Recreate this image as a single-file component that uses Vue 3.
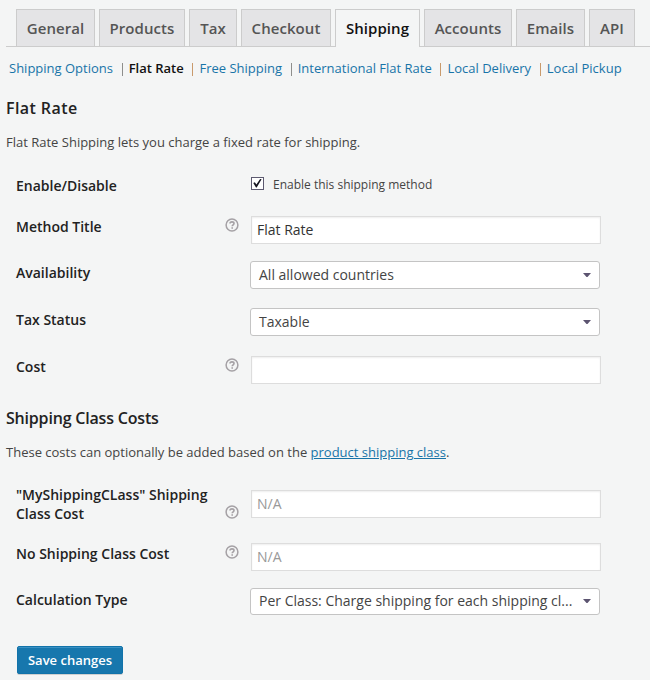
<script setup>
import { ref } from 'vue'

const tabs = ['General', 'Products', 'Tax', 'Checkout', 'Shipping', 'Accounts', 'Emails', 'API']
const methods = ['Shipping Options', 'Flat Rate', 'Free Shipping', 'International Flat Rate', 'Local Delivery', 'Local Pickup']
const enabled = ref(true)

const rates = ref([
  { label: 'Method Title', kind: 'input', value: 'Flat Rate', help: true, cls: 'title' },
  { label: 'Availability', kind: 'select', value: 'All allowed countries', cls: 'availability' },
  { label: 'Tax Status', kind: 'select', value: 'Taxable', cls: 'tax' },
  { label: 'Cost', kind: 'input', value: '', help: true, cls: 'cost' },
])
const classes = ref([
  { label: '"MyShippingCLass" Shipping Class Cost', kind: 'input', value: '', placeholder: 'N/A', help: true, cls: 'named-class' },
  { label: 'No Shipping Class Cost', kind: 'input', value: '', placeholder: 'N/A', help: true, cls: 'no-class' },
  { label: 'Calculation Type', kind: 'select', value: 'Per Class: Charge shipping for each shipping cl...', cls: 'calculation' },
])
const groups = [rates, classes]
</script>

<template>
  <main class="page">
    <nav class="tabs">
      <a v-for="t in tabs" :key="t" class="tab" :class="[t.toLowerCase(), { active: t === 'Shipping' }]">{{ t }}</a>
    </nav>

    <ul class="methods">
      <li v-for="(m, i) in methods" :key="m">
        <a :class="{ current: i === 1 }">{{ m }}</a><span v-if="i < methods.length - 1" class="bar" :class="{ warm: i === 1 || i > 2 }"></span>
      </li>
    </ul>

    <section v-for="(group, g) in groups" :key="g" :class="'group-' + g">
      <h3>{{ g === 0 ? 'Flat Rate' : 'Shipping Class Costs' }}</h3>
      <p v-if="g === 0">Flat Rate Shipping lets you charge a fixed rate for shipping.</p>
      <p v-else>These costs can optionally be added based on the <a class="link">product shipping class</a>.</p>

      <div v-if="g === 0" class="row enable">
        <span class="label">Enable/Disable</span>
        <span class="help"></span>
        <label class="check">
          <input v-model="enabled" type="checkbox" />
          <span class="box">
            <svg v-if="enabled" width="11" height="11" viewBox="0 0 11 11"><path d="M1.3 5.1 2.8 4.3 4.4 6.5 8.1 .9 9.6 1.3 4.7 9.4 4 9.4Z" fill="#15151f" /></svg>
          </span>
          Enable this shipping method
        </label>
      </div>

      <div v-for="f in group.value" :key="f.label" class="row" :class="f.cls">
        <span class="label">{{ f.label }}</span>
        <span class="help">
          <svg v-if="f.help" width="14" height="14" viewBox="0 0 14 14" fill="none" stroke="#a5a1a5">
            <circle cx="7" cy="7" r="5.9" stroke-width="1.5" />
            <path d="M5 5.6C5 4.4 5.8 3.9 7 3.9S9 4.5 9 5.5C9 6.8 7.2 6.8 7.2 8.3" stroke-width="1.6" />
            <path d="M6.4 9.9H8" stroke-width="1.5" />
          </svg>
        </span>
        <input v-if="f.kind === 'input'" v-model="f.value" class="field" type="text" :placeholder="f.placeholder" />
        <div v-else class="select">
          <span class="chosen">{{ f.value }}</span>
          <svg width="8" height="4" viewBox="0 0 8 4"><path d="M0 0H8L4.5 4H3.5Z" fill="#5c5470" /></svg>
        </div>
      </div>
    </section>

    <button class="save" type="button">Save changes</button>
  </main>
</template>

<style>
body {
  margin: 0;
  background: #f4f5f5;
}
</style>

<style scoped>
.page {
  box-sizing: border-box;
  height: 680px;
  overflow: hidden;
  padding: 9px 0 0 6px;
  background: #f4f5f5;
  color: #444;
  font: 13px/20px "Open Sans", sans-serif;
}
.tabs {
  display: flex;
  gap: 4px;
  height: 38px;
  box-sizing: border-box;
  padding-left: 10px;
  border-bottom: 1px solid #ccc;
}
.tab {
  box-sizing: border-box;
  height: 37px;
  border: 1px solid #ccc;
  border-bottom: 0;
  background: #e4e4e6;
  color: #555;
  font-size: 15px;
  letter-spacing: .06px;
  font-weight: 600;
  line-height: 36px;
  text-align: center;
  white-space: nowrap;
}
.general { width: 79px; }
.products { width: 86px; }
.tax.tab { width: 48px; }
.checkout { width: 90px; }
.shipping { width: 85px; }
.accounts { width: 88px; }
.emails { width: 69px; }
.api { width: 46px; }
.tab.active {
  height: 38px;
  background: #f4f5f5;
  color: #111;
}
.methods {
  display: flex;
  margin: 11px 0 0;
  padding: 0 0 0 3px;
  list-style: none;
  white-space: nowrap;
}
.methods li {
  display: flex;
  align-items: center;
}
.methods a, .link {
  color: #1874a8;
}
.methods .current {
  color: #111;
  font-weight: 600;
}
.bar {
  width: 1px;
  height: 13px;
  margin: 2px 6px 0 8.7px;
  background: #8e8e8c;
}
.bar.warm { background: #c99a6c; }
h3 {
  margin: 0;
  color: #222;
  font-size: 16px;
  font-weight: 600;
  line-height: 24px;
}
.group-0 { padding-top: 18px; }
.group-0 h3 { letter-spacing: .42px; }
.group-1 { padding-top: 22px; }
.group-1 h3 { letter-spacing: -.19px; }
p {
  margin: 12px 0 20px;
}
.group-1 p { margin-bottom: 28px; }
.link { text-decoration: underline; }
.row {
  display: grid;
  grid-template-columns: 209px 25px 351px;
  align-items: start;
  box-sizing: border-box;
  padding-left: 10px;
}
.label {
  margin-top: 1px;
  color: #222;
  font-size: 14px;
  font-weight: 600;
  line-height: 19px;
}
.help {
  height: 14px;
  margin-top: 2px;
}
.help svg { display: block; }
.enable { height: 44px; }
.enable .label { margin-top: 4px; }
.title { height: 45px; }
.availability { height: 47px; }
.tax.row { height: 48px; }
.availability .label, .tax .label, .calculation .label { margin-top: 2px; }
.cost { height: 28px; }
.named-class { height: 53px; }
.named-class .label { margin-top: -5px; }
.named-class .help { margin-top: 15px; }
.no-class { height: 45px; }
.calculation { height: 27px; }
.field {
  box-sizing: border-box;
  width: 350px;
  height: 28px;
  margin: 0 0 0 1px;
  padding: 0 5px 2px;
  border: 1px solid #ddd;
  background: #fff;
  box-shadow: inset 0 1px 2px rgba(0, 0, 0, .07);
  color: #333;
  font: 14px/24px "Open Sans", sans-serif;
}
.field::placeholder { color: #999; opacity: 1; }
.select {
  display: flex;
  align-items: center;
  box-sizing: border-box;
  width: 350px;
  height: 28px;
  padding: 0 8px;
  border: 1px solid #c4c4c4;
  border-radius: 3px;
  background: #fff;
  color: #444;
  font-size: 14px;
}
.calculation .select { height: 27px; padding-bottom: 1px; }
.chosen {
  width: 316px;
  margin-right: 8px;
  white-space: nowrap;
}
.check {
  display: flex;
  align-items: center;
  height: 26px;
  padding-left: 1px;
  font-size: 12px;
}
.check input {
  position: absolute;
  opacity: 0;
}
.box {
  box-sizing: border-box;
  width: 13px;
  height: 13px;
  margin: -3px 9px 0 0;
  border: 1px solid #5d5a70;
  background: #fff;
}
.box svg { display: block; }
.save {
  display: block;
  box-sizing: border-box;
  width: 106px;
  height: 28px;
  margin: 31px 0 0 11px;
  padding: 0;
  border: 1px solid #1173aa;
  border-radius: 2px;
  background: #1777ad;
  box-shadow: inset 0 1px 0 #3990c3, 0 1px 0 rgba(0, 0, 0, .15);
  color: #fff;
  font: 600 13px/26px "Open Sans", sans-serif;
}
</style>
